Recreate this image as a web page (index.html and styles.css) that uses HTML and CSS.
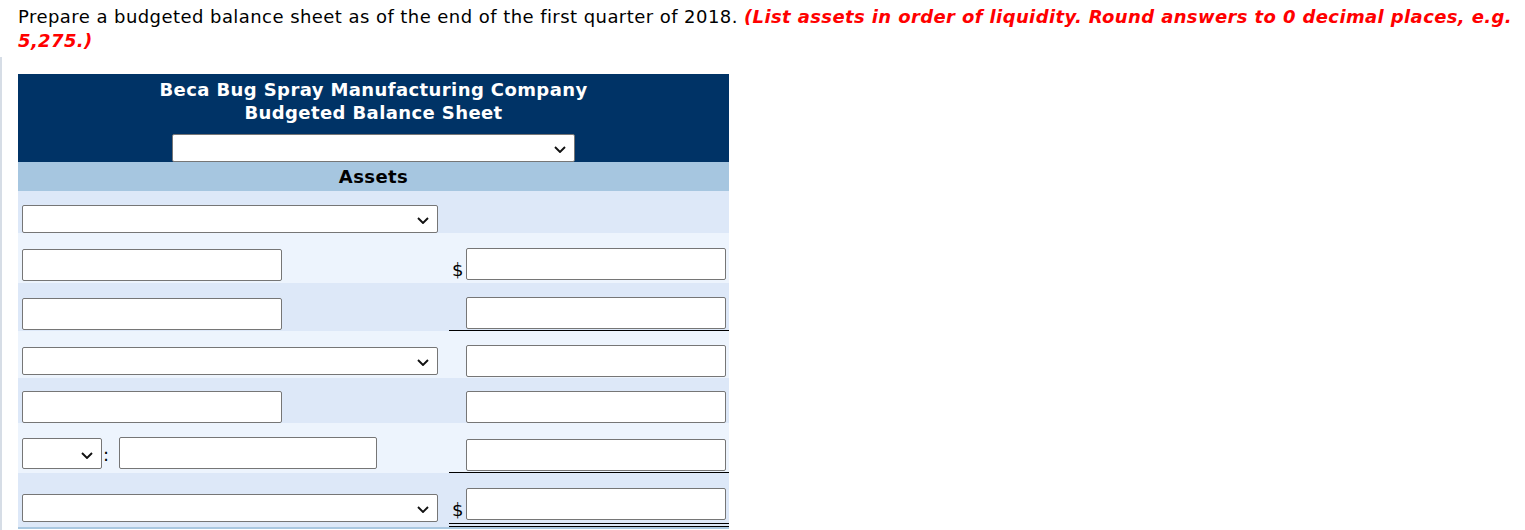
FILE: index.html
```html
<!DOCTYPE html>
<html lang="en">
<head>
<meta charset="utf-8">
<title>Budgeted Balance Sheet</title>
<link rel="stylesheet" href="styles.css">
</head>
<body>
<div class="page">
  <p class="question">Prepare a budgeted balance sheet as of the end of the first quarter of 2018. <em class="hint">(List assets in order of liquidity. Round answers to 0 decimal places, e.g.</em> <em class="hint">5,275.)</em></p>
  <div class="frame">
    <div class="sheet">
      <div class="sheet-head">
        <div class="title">Beca Bug Spray Manufacturing Company</div>
        <div class="title">Budgeted Balance Sheet</div>
        <span class="dd dd--date"><select class="sel"><option></option></select><svg class="chev" viewBox="0 0 12 7" width="12" height="7"><path d="M1 1 L6 6 L11 1" fill="none" stroke="#111" stroke-width="1.9"/></svg></span>
      </div>
      <div class="section">Assets</div>

      <div class="row row--dark r1">
        <div class="cell cell--label"><span class="dd dd--wide"><select class="sel"><option></option></select><svg class="chev" viewBox="0 0 12 7" width="12" height="7"><path d="M1 1 L6 6 L11 1" fill="none" stroke="#111" stroke-width="1.9"/></svg></span></div>
        <div class="cell cell--amount"></div>
      </div>

      <div class="row row--light r2">
        <div class="cell cell--label"><input class="inp" type="text"></div>
        <div class="cell cell--amount pb3"><span class="cur">$</span><input class="inp" type="text"></div>
      </div>

      <div class="row row--dark r3">
        <div class="cell cell--label"><input class="inp" type="text"></div>
        <div class="cell cell--amount cell--sub"><span class="cur"></span><input class="inp" type="text"></div>
      </div>

      <div class="row row--light r4">
        <div class="cell cell--label pb3"><span class="dd dd--wide"><select class="sel"><option></option></select><svg class="chev" viewBox="0 0 12 7" width="12" height="7"><path d="M1 1 L6 6 L11 1" fill="none" stroke="#111" stroke-width="1.9"/></svg></span></div>
        <div class="cell cell--amount"><span class="cur"></span><input class="inp" type="text"></div>
      </div>

      <div class="row row--dark r5">
        <div class="cell cell--label"><input class="inp" type="text"></div>
        <div class="cell cell--amount"><span class="cur"></span><input class="inp" type="text"></div>
      </div>

      <div class="row row--light r6">
        <div class="cell cell--label"><span class="dd dd--small"><select class="sel"><option></option></select><svg class="chev" viewBox="0 0 12 7" width="12" height="7"><path d="M1 1 L6 6 L11 1" fill="none" stroke="#111" stroke-width="1.9"/></svg></span><span class="colon">:</span><input class="inp inp--short" type="text"></div>
        <div class="cell cell--amount cell--sub"><span class="cur"></span><input class="inp" type="text"></div>
      </div>

      <div class="row row--dark r7">
        <div class="cell cell--label pb5"><span class="dd dd--wide"><select class="sel"><option></option></select><svg class="chev" viewBox="0 0 12 7" width="12" height="7"><path d="M1 1 L6 6 L11 1" fill="none" stroke="#111" stroke-width="1.9"/></svg></span></div>
        <div class="cell cell--amount cell--total"><span class="cur">$</span><input class="inp" type="text"></div>
      </div>
    </div>
  </div>
</div>
</body>
</html>
```
FILE: styles.css
```css
html, body {
  margin: 0;
  padding: 0;
  background: #ffffff;
}

body {
  font-family: "DejaVu Sans", Verdana, sans-serif;
  font-size: 18px;
  color: #000000;
}

.page {
  width: 1525px;
  height: 530px;
  overflow: hidden;
}

.question {
  margin: 0;
  padding: 5px 0 0 18px;
  width: 1500px;
  line-height: 24px;
  font-size: 18px;
  letter-spacing: 0.44px;
}

.hint {
  color: #ff0000;
  font-weight: bold;
  font-style: italic;
  letter-spacing: 0.38px;
}

.frame {
  margin-top: 4px;
  border-left: 2px solid #d6dde6;
  padding: 17px 0 0 16px;
  height: 460px;
}

.sheet {
  width: 711px;
  border-bottom: 2px solid #a9c7e0;
}

.sheet-head {
  background: #003366;
  color: #ffffff;
  text-align: center;
  padding: 4px 0 0;
}

.title {
  font-weight: bold;
  font-size: 18px;
  line-height: 23px;
  letter-spacing: 0.4px;
}

.section {
  background: #a6c6e0;
  text-align: center;
  font-weight: bold;
  font-size: 18px;
  letter-spacing: 0.4px;
  height: 29px;
  line-height: 30px;
}

.dd {
  position: relative;
  display: block;
  height: 28px;
}

.dd--date {
  width: 403px;
  margin: 10px 0 0 154px;
}

.dd--wide {
  width: 416px;
}

.dd--small {
  width: 80px;
  height: 31px;
}

.sel {
  -webkit-appearance: none;
  appearance: none;
  box-sizing: border-box;
  display: block;
  width: 100%;
  height: 100%;
  background: #ffffff;
  border: 1px solid #767676;
  border-radius: 2px;
  font-family: "DejaVu Sans", sans-serif;
  font-size: 13px;
  margin: 0;
}

.chev {
  position: absolute;
  right: 9px;
  top: 50%;
  margin-top: -2px;
  pointer-events: none;
}

.inp {
  box-sizing: border-box;
  width: 260px;
  height: 32px;
  background: #ffffff;
  border: 1px solid #767676;
  border-radius: 2px;
  margin: 0;
  padding: 0 4px;
  font-family: "DejaVu Sans", sans-serif;
  font-size: 13px;
}

.inp--short {
  width: 258px;
}

.row {
  display: grid;
  grid-template-columns: 431px 280px;
}

.row--dark {
  background: #dde8f8;
}

.row--light {
  background: #edf4fd;
}

.r1 { height: 42px; }
.r2 { height: 50px; }
.r3 { height: 48px; }
.r4 { height: 47px; }
.r5 { height: 45px; }
.r6 { height: 50px; }
.r7 { height: 54px; }

.cell {
  display: flex;
  align-items: flex-end;
  box-sizing: border-box;
}

.cell--label {
  padding: 0 0 1px 4px;
}

.cell--amount {
  padding: 0 3px 1px 3px;
}

.r1 .cell--label { padding-bottom: 0; }
.r2 .cell--label { padding-bottom: 2px; }
.r5 .cell { padding-bottom: 0; }
.r6 .cell--label { padding-bottom: 4px; }

.pb3 { padding-bottom: 3px; }
.pb5 { padding-bottom: 5px; }

.cell--sub {
  border-bottom: 1px solid #000000;
  padding-bottom: 1px;
}

.cell--total {
  border-bottom: 4px double #000000;
  padding-bottom: 3px;
}

.cur {
  width: 14px;
  font-size: 18px;
  line-height: 20px;
  padding-bottom: 0;
}

.colon {
  width: 17px;
  padding-left: 1px;
  box-sizing: border-box;
  font-size: 18px;
  line-height: 20px;
  padding-bottom: 4px;
}
```
